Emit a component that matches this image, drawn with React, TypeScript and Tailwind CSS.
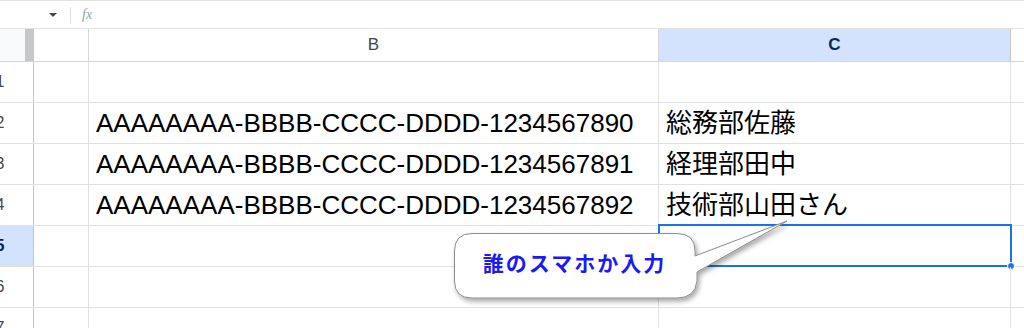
import React from "react";

const ROWS: { n: number; b: string; c: string }[] = [
  { n: 1, b: "", c: "" },
  { n: 2, b: "AAAAAAAA-BBBB-CCCC-DDDD-1234567890", c: "総務部佐藤" },
  { n: 3, b: "AAAAAAAA-BBBB-CCCC-DDDD-1234567891", c: "経理部田中" },
  { n: 4, b: "AAAAAAAA-BBBB-CCCC-DDDD-1234567892", c: "技術部山田さん" },
  { n: 5, b: "", c: "" },
  { n: 6, b: "", c: "" },
  { n: 7, b: "", c: "" },
];

const SELECTED_ROW = 5;

function FormulaBar() {
  return (
    <div className="flex h-[29px] items-center border-t border-b border-[#e1e3e1] bg-white">
      <div className="w-[48px]" />
      <svg width="10" height="6" viewBox="0 0 10 6" className="mt-px">
        <path d="M1 1h8L5 5z" fill="#444746" />
      </svg>
      <div className="ml-[12px] h-[16px] w-px bg-[#dadce0]" />
      <span className="ml-[11px] font-['Liberation_Serif',serif] text-[14px] italic text-[#9aa0a6]">fx</span>
    </div>
  );
}

function HeaderRow() {
  return (
    <div className="flex h-[33px] border-b border-[#d6d6d6]">
      <div className="flex w-[34px] shrink-0">
        <div className="w-[25px] bg-[#f8f9fa]" />
        <div className="w-[9px] bg-[#c7c7c7]" />
      </div>
      <div className="w-[55px] shrink-0 border-r border-[#d6d6d6] bg-white" />
      <div className="flex w-[570px] shrink-0 items-center justify-center border-r border-[#d6d6d6] bg-white text-[17px] text-[#444746]">
        B
      </div>
      <div className="flex w-[352px] shrink-0 items-center justify-center border-r border-[#c4c7c5] bg-[#d3e3fd] text-[17px] font-bold text-[#0b2a5c]">
        C
      </div>
      <div className="flex-1 bg-white" />
    </div>
  );
}

function DataRow({ n, b, c }: { n: number; b: string; c: string }) {
  const sel = n === SELECTED_ROW;
  return (
    <div className="flex h-[41px] border-b border-[#e1e1e1]">
      <div
        className={`relative w-[34px] shrink-0 overflow-hidden border-r border-[#c7c7c7] ${
          sel ? "bg-[#d3e3fd]" : "bg-white"
        }`}
      >
        <div
          className={`absolute -left-[33px] top-0 flex h-full w-[66px] items-center justify-center text-[16px] ${
            sel ? "font-bold text-[#041e49]" : "text-[#444746]"
          }`}
        >
          {n}
        </div>
      </div>
      <div className="w-[55px] shrink-0 border-r border-[#e1e1e1]" />
      <div className="flex w-[570px] shrink-0 items-center border-r border-[#e1e1e1] pl-[7px] text-[26px] text-black">
        {b}
      </div>
      <div className="relative flex w-[352px] shrink-0 items-center border-r border-[#e1e1e1] pl-[7px] text-[26px] text-black">
        {c}
        {sel && (
          <>
            <div className="absolute -top-[2px] -left-[1px] -right-[2px] -bottom-[1px] border-2 border-[#1a73e8]" />
            <div className="absolute -right-[5px] -bottom-[4px] h-[8px] w-[8px] rounded-full border border-white bg-[#1a73e8]" />
          </>
        )}
      </div>
      <div className="flex-1" />
    </div>
  );
}

// speech bubble pointing up-right at the selected cell
function Callout() {
  return (
    <div className="pointer-events-none absolute left-0 top-0 h-[328px] w-[1024px]">
      <svg width="1024" height="328" className="absolute left-0 top-0">
        <defs>
          <filter id="bubble-shadow" x="-10%" y="-20%" width="130%" height="150%">
            <feDropShadow dx="2" dy="3" stdDeviation="2.5" floodColor="#000" floodOpacity="0.35" />
          </filter>
        </defs>
        <path
          d="M472 233.5 H677 Q695 233.5 695 251 V256 L787 221 L697 272 V281 Q695 298 677 298 H472 Q454.5 298 454.5 281 V251 Q454.5 233.5 472 233.5 Z"
          fill="#fff"
          stroke="#8c8c8c"
          strokeWidth="1"
          filter="url(#bubble-shadow)"
        />
      </svg>
      <div className="absolute left-[454px] top-[234px] flex h-[58px] w-[241px] items-center justify-center font-['Noto_Sans_CJK_JP',sans-serif] text-[21px] font-bold tracking-[2px] text-[#1a1af5]">
        誰のスマホか入力
      </div>
    </div>
  );
}

export default function App() {
  return (
    <div className="relative h-[328px] w-[1024px] overflow-hidden bg-white font-['Liberation_Sans','Noto_Sans_CJK_JP',sans-serif]">
      <FormulaBar />
      <HeaderRow />
      {ROWS.map((r) => (
        <DataRow key={r.n} {...r} />
      ))}
      <Callout />
    </div>
  );
}
